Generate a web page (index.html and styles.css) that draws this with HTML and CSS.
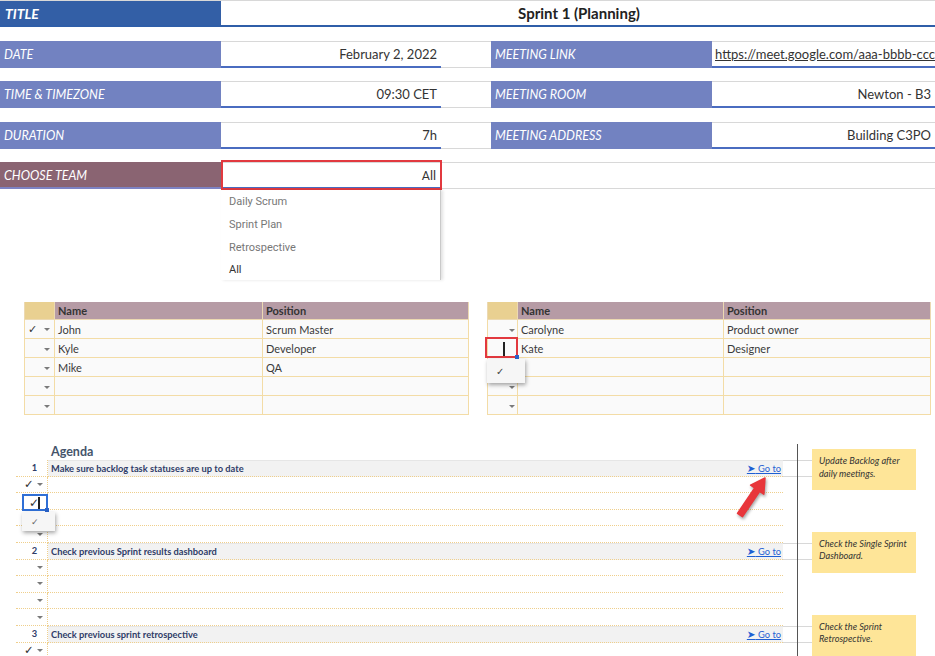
FILE: index.html
```html
<!DOCTYPE html>
<html lang="en">
<head>
<meta charset="utf-8">
<title>Sprint 1 (Planning)</title>
<link rel="stylesheet" href="styles.css">
</head>
<body>
<section class="meta">
  <div class="title-row">
    <div class="title-label">TITLE</div>
    <div class="title-value">Sprint 1 (Planning)</div>
  </div>
  <div class="meta-row">
    <div class="label">DATE</div>
    <div class="value">February 2, 2022</div>
    <div class="spacer"></div>
    <div class="label">MEETING LINK</div>
    <div class="value link"><span>https://meet.google.com/aaa-bbbb-ccc</span></div>
  </div>
  <div class="meta-row">
    <div class="label">TIME &amp; TIMEZONE</div>
    <div class="value">09:30 CET</div>
    <div class="spacer"></div>
    <div class="label">MEETING ROOM</div>
    <div class="value">Newton - B3</div>
  </div>
  <div class="meta-row">
    <div class="label">DURATION</div>
    <div class="value">7h</div>
    <div class="spacer"></div>
    <div class="label">MEETING ADDRESS</div>
    <div class="value">Building C3PO</div>
  </div>
  <div class="team-row">
    <div class="label team">CHOOSE TEAM</div>
    <div class="value select">All
      <div class="select-ring"></div>
      <ul class="options">
        <li>Daily Scrum</li>
        <li>Sprint Plan</li>
        <li>Retrospective</li>
        <li class="current">All</li>
      </ul>
    </div>
    <div class="spacer"></div>
  </div>
</section>

<section class="tables">
  <table class="members left">
    <colgroup><col class="w0"><col class="w1"><col class="w2"></colgroup>
    <thead><tr><th class="c0"></th><th>Name</th><th>Position</th></tr></thead>
    <tbody>
      <tr><td class="c0"><span class="chk-mark">✓</span><span class="tri"></span></td><td>John</td><td>Scrum Master</td></tr>
      <tr><td class="c0"><span class="chk-mark"></span><span class="tri"></span></td><td>Kyle</td><td>Developer</td></tr>
      <tr><td class="c0"><span class="chk-mark"></span><span class="tri"></span></td><td>Mike</td><td>QA</td></tr>
      <tr><td class="c0"><span class="chk-mark"></span><span class="tri"></span></td><td></td><td></td></tr>
      <tr><td class="c0"><span class="chk-mark"></span><span class="tri"></span></td><td></td><td></td></tr>
    </tbody>
  </table>
  <table class="members right">
    <colgroup><col class="w0"><col class="w1r"><col class="w2r"></colgroup>
    <thead><tr><th class="c0"></th><th>Name</th><th>Position</th></tr></thead>
    <tbody>
      <tr><td class="c0"><span class="chk-mark"></span><span class="tri"></span></td><td>Carolyne</td><td>Product owner</td></tr>
      <tr><td class="c0 editing"><span class="cursor"></span><span class="red-ring"></span><span class="handle"></span><div class="pick"><span>✓</span></div></td><td>Kate</td><td>Designer</td></tr>
      <tr><td class="c0"></td><td></td><td></td></tr>
      <tr><td class="c0"><span class="chk-mark"></span><span class="tri"></span></td><td></td><td></td></tr>
      <tr><td class="c0"><span class="chk-mark"></span><span class="tri"></span></td><td></td><td></td></tr>
    </tbody>
  </table>
</section>

<section class="agenda">
  <svg class="pointer" width="48" height="50" viewBox="0 0 48 50" aria-hidden="true">
    <polygon points="15.5,43.7 32.7,18.3 36.8,21.1 38,5 23.6,12.1 27.7,14.9 10.5,40.3" fill="#e8363b" stroke="#e8363b" stroke-width="1.5" stroke-linejoin="round"/>
  </svg>

  <div class="arow head">
    <div class="chk"></div>
    <div class="txt"><span class="agenda-title">Agenda</span></div>
    <div class="conn"></div><div class="vline"></div><div class="conn"></div>
    <div class="ncol"></div>
  </div>

  <div class="arow band">
    <div class="chk num">1</div>
    <div class="txt"><span>Make sure backlog task statuses are up to date</span><a class="goto"><span class="arr">➤</span> Go to</a></div>
    <div class="conn"></div><div class="vline"></div><div class="conn"></div>
    <div class="ncol"><div class="note">Update Backlog after daily meetings.</div></div>
  </div>
  <div class="arow">
    <div class="chk"><span class="chk-mark">✓</span><span class="tri"></span></div>
    <div class="txt"></div>
    <div class="gap"></div><div class="vline"></div><div class="gap"></div><div class="ncol"></div>
  </div>
  <div class="arow">
    <div class="chk edit-cell"><span class="sel"><span class="chk-mark">✓</span><span class="cursor small"></span></span><span class="handle"></span><div class="pick small"><span>✓</span></div></div>
    <div class="txt"></div>
    <div class="gap"></div><div class="vline"></div><div class="gap"></div><div class="ncol"></div>
  </div>
  <div class="arow">
    <div class="chk"></div>
    <div class="txt"></div>
    <div class="gap"></div><div class="vline"></div><div class="gap"></div><div class="ncol"></div>
  </div>
  <div class="arow">
    <div class="chk"><span class="chk-mark"></span><span class="tri"></span></div>
    <div class="txt"></div>
    <div class="gap"></div><div class="vline"></div><div class="gap"></div><div class="ncol"></div>
  </div>

  <div class="arow band">
    <div class="chk num">2</div>
    <div class="txt"><span>Check previous Sprint results dashboard</span><a class="goto"><span class="arr">➤</span> Go to</a></div>
    <div class="conn"></div><div class="vline"></div><div class="conn"></div>
    <div class="ncol"><div class="note">Check the Single Sprint Dashboard.</div></div>
  </div>
  <div class="arow">
    <div class="chk"><span class="chk-mark"></span><span class="tri"></span></div>
    <div class="txt"></div>
    <div class="gap"></div><div class="vline"></div><div class="gap"></div><div class="ncol"></div>
  </div>
  <div class="arow">
    <div class="chk"><span class="chk-mark"></span><span class="tri"></span></div>
    <div class="txt"></div>
    <div class="gap"></div><div class="vline"></div><div class="gap"></div><div class="ncol"></div>
  </div>
  <div class="arow">
    <div class="chk"><span class="chk-mark"></span><span class="tri"></span></div>
    <div class="txt"></div>
    <div class="gap"></div><div class="vline"></div><div class="gap"></div><div class="ncol"></div>
  </div>
  <div class="arow">
    <div class="chk"><span class="chk-mark"></span><span class="tri"></span></div>
    <div class="txt"></div>
    <div class="gap"></div><div class="vline"></div><div class="gap"></div><div class="ncol"></div>
  </div>

  <div class="arow band">
    <div class="chk num">3</div>
    <div class="txt"><span>Check previous sprint retrospective</span><a class="goto"><span class="arr">➤</span> Go to</a></div>
    <div class="conn"></div><div class="vline"></div><div class="conn"></div>
    <div class="ncol"><div class="note">Check the Sprint Retrospective.</div></div>
  </div>
  <div class="arow">
    <div class="chk"><span class="chk-mark">✓</span><span class="tri"></span></div>
    <div class="txt"></div>
    <div class="gap"></div><div class="vline"></div><div class="gap"></div><div class="ncol"></div>
  </div>
  <div class="arow">
    <div class="chk"><span class="chk-mark"></span><span class="tri"></span></div>
    <div class="txt"></div>
    <div class="gap"></div><div class="vline"></div><div class="gap"></div><div class="ncol"></div>
  </div>
</section>
</body>
</html>
```

FILE: styles.css
```css
* { box-sizing: border-box; margin: 0; padding: 0; }
html, body { width: 935px; height: 656px; overflow: hidden; background: #fff; }
body { font-family: Lato, "Open Sans", sans-serif; color: #333; }

/* ---------- meta header ---------- */
.meta { display: flex; flex-direction: column; gap: 13.5px; }
.title-row {
  display: grid; grid-template-columns: 221px 1fr; height: 27px;
  border-top: 1px solid #d8d8d8; border-bottom: 2px solid #2f5ea8;
}
.title-label {
  background: #335fa6; color: #fff; font-weight: 700; font-style: italic;
  font-size: 14px; padding-left: 5px; display: flex; align-items: center;
}
.title-value {
  display: flex; align-items: center; justify-content: center;
  font-weight: 700; font-size: 15px; color: #222; padding-left: 2px;
}
.meta-row { display: grid; grid-template-columns: 221px 220px 50px 221px 223px; height: 27px; }
.team-row { display: grid; grid-template-columns: 221px 220px 1fr; height: 27px; }
.label {
  background: #7282c1; color: #fff; font-style: italic; font-size: 12.5px;
  display: flex; align-items: center; padding-left: 4px; white-space: nowrap;
}
.label.team { background: #8a6472; border-bottom: 2px solid #7d83c4; padding-top: 2px; }
.value {
  border-top: 1px solid #d8d8d8; border-bottom: 2px solid #4a6cc0;
  display: flex; align-items: center; justify-content: flex-end;
  padding-right: 4px; font-size: 13px; color: #333; white-space: nowrap;
}
.value.link { justify-content: flex-start; padding-left: 3px; padding-right: 0; overflow: hidden; }
.value.link span { text-decoration: underline; }
.spacer { border-top: 1px solid #d8d8d8; border-bottom: 1px solid #d8d8d8; }

.select { position: relative; font-family: Roboto, sans-serif; font-size: 12.5px; padding-right: 5px; }
.select-ring {
  position: absolute; top: -3px; left: 0; right: -1px; bottom: -3px;
  border: 2px solid #e2393f;
}
.options {
  position: absolute; top: calc(100% + 3px); left: 0; width: 220px; height: 90px;
  list-style: none; background: #fff; border-right: 1px solid #c9c9c9;
  box-shadow: 2px 0 3px rgba(0,0,0,0.12); padding-top: 1px;
  font-family: Roboto, sans-serif; font-size: 11px; color: #777;
}
.options li { height: 22.8px; line-height: 22.8px; padding-left: 8px; }
.options li.current { color: #333; }

/* ---------- member tables ---------- */
.tables { display: flex; gap: 18px; padding-left: 24px; margin-top: 112.5px; }
.members { border-collapse: collapse; table-layout: fixed; font-size: 11px; }
.members.left { width: 444px; }
.members.right { width: 443px; }
.w0 { width: 30px; }
.w1 { width: 208px; }
.w2 { width: 206px; }
.w1r { width: 206px; }
.w2r { width: 207px; }
.members th {
  height: 18px; background: #b69ba5; color: #333; text-align: left; font-weight: 700;
  padding-left: 3px; border: 1px solid #ecd9b2; border-top: none;
}
.members th.c0 { background: #e9d091; }
.members td {
  height: 19px; background: #fafafa; border: 1px solid #f3dca6;
  padding: 0 0 0 3px; white-space: nowrap; color: #3a3a3a;
}
.members td.c0 { position: relative; padding: 0; }
.chk-mark {
  display: inline-block; width: 18px; padding-left: 3px;
  font-family: "DejaVu Sans", sans-serif; font-size: 11px; color: #333; vertical-align: middle;
}
.tri {
  display: inline-block; vertical-align: middle; margin-left: 1px;
  border-left: 3px solid transparent; border-right: 3px solid transparent; border-top: 3px solid #7a7a7a;
}
.right .c0 .tri { margin-left: 3px; }

.editing .cursor {
  position: absolute; left: 15px; top: 3px; width: 1.5px; height: 14px; background: #222;
}
.red-ring {
  position: absolute; left: -3px; top: -2px; width: 33px; height: 21px;
  border: 2px solid #e2393f; z-index: 3;
}
.handle {
  position: absolute; right: -2px; bottom: -2px; width: 4px; height: 4px; background: #2a62c9; z-index: 4;
}
.pick {
  position: absolute; left: -1px; top: 20px; width: 38px; height: 24px; z-index: 5;
  background: #f6f6f6; box-shadow: 1px 2px 4px rgba(0,0,0,0.35);
  display: flex; align-items: center; padding-left: 9px;
  font-family: "DejaVu Sans", sans-serif; font-size: 10px; color: #444;
}

/* ---------- agenda ---------- */
.agenda { position: relative; margin-top: 29px; margin-left: 16px; }
.pointer {
  position: absolute; left: 711px; top: 29px; z-index: 6;
  filter: drop-shadow(1px 2px 1.5px rgba(0,0,0,0.35));
}
.arow { display: flex; height: 16.6px; }
.arow.head { height: 16px; }
.chk {
  width: 32px; flex: none; position: relative;
  border-right: 1px dotted #efcf8c; border-bottom: 1px dotted #efcf8c;
  display: flex; align-items: center; padding-left: 5px;
}
.chk .tri { margin-left: 0; }
.chk .chk-mark { width: 16px; font-size: 11.5px; }
.txt {
  width: 735px; flex: none; border-bottom: 1px dotted #efcf8c;
  display: flex; align-items: center; justify-content: space-between; padding: 0 2px 0 3px;
}
.head .chk { border: none; }
.head .txt { border: none; align-items: center; }
.agenda-title { font-weight: 700; font-size: 12.5px; color: #44546a; line-height: 14px; }
.conn, .gap { width: 14px; flex: none; }
.band .conn { border-top: 1px solid #d8d8d8; border-bottom: 1px solid #d8d8d8; }
.vline { width: 1px; flex: none; background: #555; }
.ncol { width: 104px; flex: none; }

.band .txt { background: #f2f2f2; border-top: 1px solid #e6e6e6; }
.band .txt > span:first-child { font-weight: 700; font-size: 9.3px; color: #2f3c68; }
.chk.num {
  justify-content: center; padding-left: 6px; border-right: 1px dotted #efcf8c;
  font-weight: 700; font-size: 9.3px; color: #2f3c68;
}
.goto { color: #1f5fd3; font-size: 9.3px; text-decoration: underline; white-space: nowrap; }
.goto .arr { font-family: "DejaVu Sans", sans-serif; font-size: 10.5px; line-height: 9px; }
.note {
  margin-top: -11px; height: 41px; background: #fee598;
  font-style: italic; font-size: 9.2px; line-height: 12.5px; color: #333;
  padding: 6px 3px 0 7px; position: relative; z-index: 2;
}

.edit-cell .sel {
  position: absolute; left: 6px; top: 1px; width: 26px; height: 17px;
  border: 2px solid #2f6fd6; background: #fff; display: flex; align-items: center; padding-left: 5px; z-index: 3;
}
.edit-cell .sel .chk-mark { padding-left: 0; width: 9px; font-size: 12px; font-weight: 700; }
.cursor.small { display: inline-block; width: 1.5px; height: 12px; background: #222; }
.edit-cell .handle { right: -2px; bottom: -3px; }
.pick.small { left: 6px; top: 19px; width: 33px; height: 19px; padding-left: 9px; font-size: 9px; color: #666; }
```
